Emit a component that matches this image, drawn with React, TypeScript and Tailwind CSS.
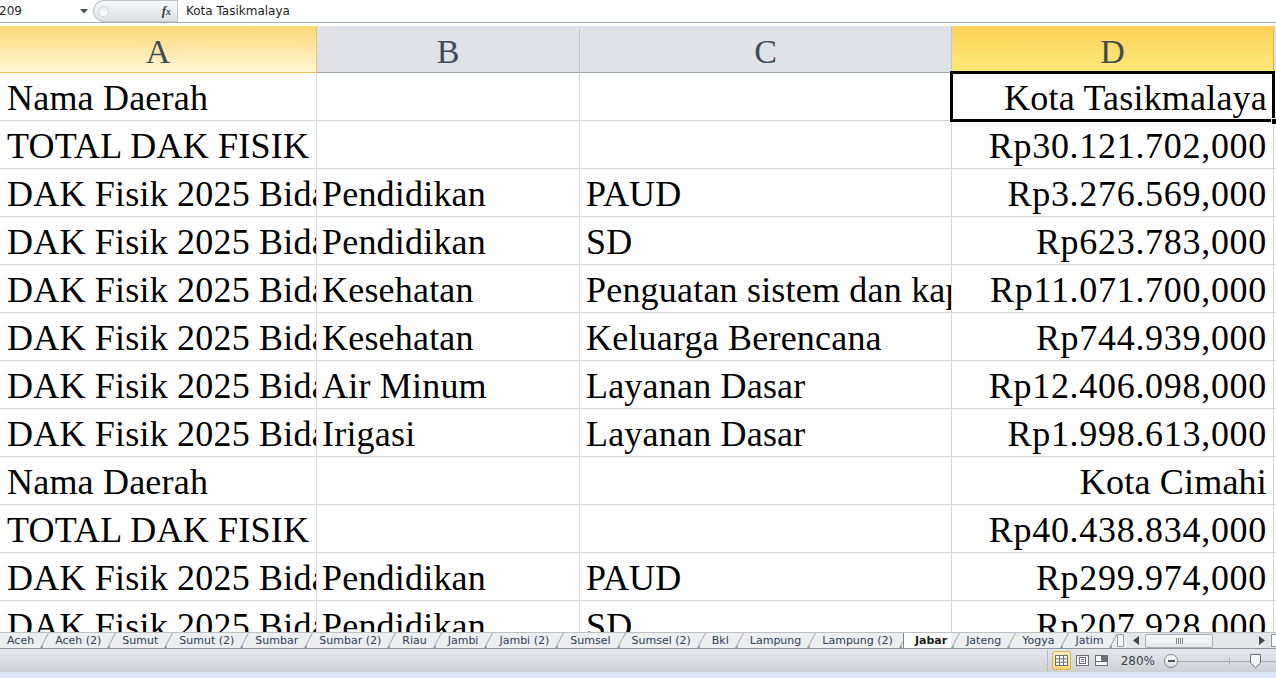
import React from 'react'

type Row = [string, string, string, string]

const rows: Row[] = [
  ['Nama Daerah', '', '', 'Kota Tasikmalaya'],
  ['TOTAL DAK FISIK', '', '', 'Rp30.121.702,000'],
  ['DAK Fisik 2025 Bidang', 'Pendidikan', 'PAUD', 'Rp3.276.569,000'],
  ['DAK Fisik 2025 Bidang', 'Pendidikan', 'SD', 'Rp623.783,000'],
  ['DAK Fisik 2025 Bidang', 'Kesehatan', 'Penguatan sistem dan kapasitas', 'Rp11.071.700,000'],
  ['DAK Fisik 2025 Bidang', 'Kesehatan', 'Keluarga Berencana', 'Rp744.939,000'],
  ['DAK Fisik 2025 Bidang', 'Air Minum', 'Layanan Dasar', 'Rp12.406.098,000'],
  ['DAK Fisik 2025 Bidang', 'Irigasi', 'Layanan Dasar', 'Rp1.998.613,000'],
  ['Nama Daerah', '', '', 'Kota Cimahi'],
  ['TOTAL DAK FISIK', '', '', 'Rp40.438.834,000'],
  ['DAK Fisik 2025 Bidang', 'Pendidikan', 'PAUD', 'Rp299.974,000'],
  ['DAK Fisik 2025 Bidang', 'Pendidikan', 'SD', 'Rp207.928,000'],
]

const tabs = [
  'Aceh', 'Aceh (2)', 'Sumut', 'Sumut (2)', 'Sumbar', 'Sumbar (2)', 'Riau', 'Jambi',
  'Jambi (2)', 'Sumsel', 'Sumsel (2)', 'Bkl', 'Lampung', 'Lampung (2)', 'Jabar',
  'Jateng', 'Yogya', 'Jatim',
]

const serif = "font-['Liberation_Serif','Times_New_Roman',serif]"
const ui = "font-['DejaVu_Sans',sans-serif]"

function Slash() {
  return (
    <svg width="9" height="15" viewBox="0 0 9 15" className="shrink-0">
      <line x1="0.5" y1="15" x2="8.5" y2="0" stroke="#9aa1a9" strokeWidth="1" />
      <path d="M0 15 L3 15 L3 12 Z" fill="#9aa1a9" />
    </svg>
  )
}

function FormulaBar() {
  return (
    <div className={`flex h-[23px] border-b border-[#a7adb4] bg-white ${ui} text-[12px] text-[#1e1e1e]`}>
      <div className="flex w-[93px] items-center justify-between pr-[5px]">
        <span className="-ml-px">209</span>
        <svg width="8" height="5" viewBox="0 0 8 5">
          <path d="M0 0 H8 L4 4.5 Z" fill="#4a4f55" />
        </svg>
      </div>
      <div className="flex w-[84px] items-center justify-between rounded-l-full border border-r-0 border-[#c2c7cd] bg-linear-to-b from-[#f6f7f8] to-[#dfe2e6] pl-[4px] pr-[6px]">
        <div className="h-[11px] w-[11px] rounded-full border border-[#d0d3d7] bg-linear-to-b from-[#e9ebed] to-[#ffffff]" />
        <span className="font-['Liberation_Serif',serif] text-[13px] font-bold italic text-[#3a3f45]">
          f<span className="text-[10px]">x</span>
        </span>
      </div>
      <div className="flex flex-1 items-center border-l border-[#c2c7cd] pl-[8px]">Kota Tasikmalaya</div>
    </div>
  )
}

function HeaderRow() {
  const cols = [
    { l: 'A', w: 'w-[317px]', sel: 'light' },
    { l: 'B', w: 'w-[263px]', sel: '' },
    { l: 'C', w: 'w-[372px]', sel: '' },
    { l: 'D', w: 'w-[322px]', sel: 'strong' },
    { l: 'E', w: 'w-[200px]', sel: '' },
  ]
  return (
    <div className="flex h-[47px] shrink-0">
      {cols.map((c) => (
        <div
          key={c.l}
          className={`${c.w} shrink-0 flex items-end justify-center pb-[3px] border-r border-b ${serif} text-[34px] leading-[34px] text-[#3f4b59] ${
            c.sel === 'strong'
              ? 'bg-linear-to-b from-[#fcd158] to-[#fee978] border-[#e1b03e]'
              : c.sel === 'light'
              ? 'bg-linear-to-b from-[#fbd874] to-[#fff7d6] border-[#eec35a]'
              : 'bg-[#dfe3e8] border-b-[#9da4ac] border-r-[#c3c8ce]'
          }`}
        >
          {c.l}
        </div>
      ))}
    </div>
  )
}

function Grid() {
  const widths = ['w-[317px]', 'w-[263px]', 'w-[372px]', 'w-[322px]', 'w-[200px]']
  return (
    <div className="flex-1 overflow-hidden bg-white">
      {rows.map((r, i) => (
        <div key={i} className="flex h-[48px] shrink-0">
          {[...r, ''].map((v, j) => (
            <div
              key={j}
              className={`${widths[j]} relative shrink-0 flex items-end overflow-hidden whitespace-nowrap border-r border-b border-[#d4d4d4] px-[6px] pb-[4px] ${serif} text-[36px] leading-[36px] text-black ${
                v.startsWith('Rp') ? 'tracking-[0.7px]' : 'tracking-[0.2px]'
              } ${j === 3 ? 'justify-end' : ''} ${j === 0 ? 'pl-[7px]' : ''} ${j === 1 ? 'pl-[5px]' : ''}`}
            >
              {v}
            </div>
          ))}
        </div>
      ))}
    </div>
  )
}

function TabBar() {
  return (
    <div className={`flex h-[17px] shrink-0 border-t border-[#bcc1c6] border-b border-b-[#8c939b] bg-[#eceeef] ${ui} text-[11px] leading-[15px] text-[#2d405a]`}>
      <div className="flex flex-1 items-end overflow-hidden pl-[7px]">
        {tabs.map((t) => {
          const active = t === 'Jabar'
          return (
            <React.Fragment key={t}>
              {active ? (
                <div className="-ml-[11px] flex h-[16px] shrink-0 items-end">
                  <div className="h-full w-px bg-[#7d858e]" />
                  <span className="-mt-px whitespace-nowrap bg-white pl-[11px] pr-[4px] font-bold text-[#1c1c1c]">{t}</span>
                </div>
              ) : (
                <span className="shrink-0 whitespace-nowrap pr-[6px]">{t}</span>
              )}
              <Slash />
              <span className="w-[6px] shrink-0" />
            </React.Fragment>
          )
        })}
      </div>
      <div className="flex w-[159px] shrink-0 items-center">
        <div className="h-[13px] w-[7px] rounded-[1px] border border-[#8f969e] bg-white" />
        <div className="ml-[3px] flex h-full flex-1 items-center bg-[#e4e7ea]">
          <svg width="6" height="9" viewBox="0 0 6 9" className="ml-[6px]">
            <path d="M6 0 V9 L0 4.5 Z" fill="#404549" />
          </svg>
          <div className="ml-[6px] flex h-[14px] w-[68px] items-center justify-center rounded-[2px] border border-[#a8aeb5] bg-linear-to-b from-[#fbfbfc] to-[#e4e7ea]">
            <svg width="7" height="6" viewBox="0 0 7 6">
              <path d="M0.5 0V6M2.5 0V6M4.5 0V6M6.5 0V6" stroke="#7d848b" strokeWidth="1" />
            </svg>
          </div>
          <div className="flex-1" />
          <svg width="6" height="9" viewBox="0 0 6 9" className="mr-[6px]">
            <path d="M0 0 V9 L6 4.5 Z" fill="#404549" />
          </svg>
          <div className="h-[13px] w-[5px] border border-r-0 border-[#8f969e] bg-white" />
        </div>
      </div>
    </div>
  )
}

function StatusBar() {
  return (
    <div className={`flex h-[23px] shrink-0 items-center bg-linear-to-b from-[#e5e8eb] to-[#cdd1d6] ${ui} text-[12px] text-[#333]`}>
      <div className="flex-1" />
      <div className="mr-[4px] h-[21px] w-px bg-[#b3b8be]" />
      <div className="flex h-[19px] w-[19px] items-center justify-center rounded-[2px] border border-[#e0b24a] bg-linear-to-b from-[#fff1bd] to-[#fcd77a]">
        <svg width="13" height="11" viewBox="0 0 13 11">
          <rect x="0.5" y="0.5" width="12" height="10" fill="#fff" stroke="#6b7178" />
          <path d="M4.5 0.5V10.5M8.5 0.5V10.5M0.5 3.8H12.5M0.5 7.2H12.5" stroke="#6b7178" />
        </svg>
      </div>
      <div className="ml-[3px] flex h-[19px] w-[17px] items-center justify-center">
        <svg width="13" height="11" viewBox="0 0 13 11">
          <rect x="0.5" y="0.5" width="12" height="10" fill="#f4f5f6" stroke="#6b7178" />
          <rect x="3.5" y="2.5" width="6" height="6" fill="#fff" stroke="#6b7178" />
          <path d="M5 4.5H8M5 6.5H8" stroke="#6b7178" />
        </svg>
      </div>
      <div className="ml-[2px] flex h-[19px] w-[17px] items-center justify-center">
        <svg width="13" height="11" viewBox="0 0 13 11">
          <rect x="0.5" y="0.5" width="12" height="10" fill="#fff" stroke="#6b7178" />
          <path d="M6.5 0.5V6.5M0.5 6.5H12.5" stroke="#6b7178" />
          <rect x="7" y="1" width="5" height="5" fill="#6b7178" />
        </svg>
      </div>
      <span className="ml-[11px] text-[#3a3f45]">280%</span>
      <div className="ml-[9px] flex h-[14px] w-[14px] items-center justify-center rounded-full border border-[#80878f] bg-linear-to-b from-[#ffffff] to-[#dadde1]">
        <div className="h-[2px] w-[7px] bg-[#4a4f55]" />
      </div>
      <div className="relative h-[14px] w-[98px]">
        <div className="absolute left-0 right-0 top-[7px] h-px bg-[#a4aab0]" />
        <div className="absolute left-[51px] top-[4px] h-[7px] w-px bg-[#a4aab0]" />
        <svg width="11" height="14" viewBox="0 0 11 14" className="absolute left-[72px] top-0">
          <path d="M0.5 0.5H10.5V9L5.5 13.5L0.5 9Z" fill="#f4f5f6" stroke="#6d747b" />
        </svg>
      </div>
    </div>
  )
}

export default function App() {
  return (
    <div className="relative flex h-[678px] w-[1276px] flex-col overflow-hidden bg-white">
      <FormulaBar />
      <div className="h-[3px] shrink-0 bg-white" />
      <div className="w-[1276px] overflow-hidden">
        <HeaderRow />
      </div>
      <Grid />
      <TabBar />
      <StatusBar />
      <div className="h-[6px] shrink-0 bg-[#dbe5f3]" />
      {/* active cell D1 */}
      <div className="pointer-events-none absolute left-[950px] top-[71px] h-[51px] w-[325px] border-[3px] border-black" />
      <div className="absolute left-[1271px] top-[118px] h-[7px] w-[7px] border border-white bg-black" />
    </div>
  )
}
